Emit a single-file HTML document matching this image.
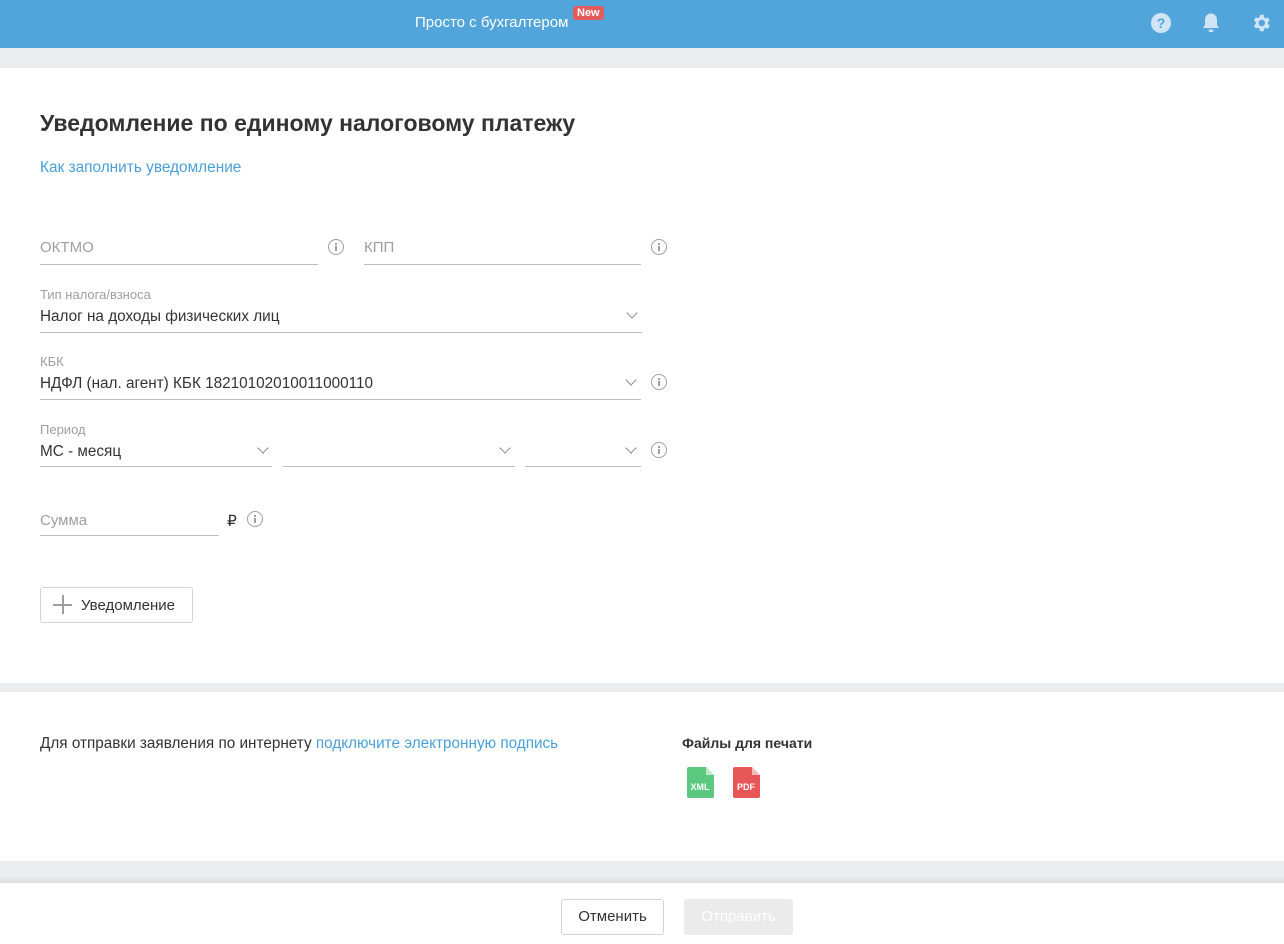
<!DOCTYPE html>
<html><head><meta charset="utf-8">
<style>
*{box-sizing:border-box;margin:0;padding:0}
body{width:1284px;height:944px;background:#ebeef1;font-family:"Liberation Sans",sans-serif;position:relative;overflow:hidden;color:#333}
.a{position:absolute}
.hdr{left:0;top:0;width:1284px;height:48px;background:#52a5db}
.w{background:#fff;left:0;width:1284px}
.line{height:1px;background:#bdbdbd}
.ph{color:#9e9e9e;font-size:15px}
.lbl{color:#9e9e9e;font-size:13px}
.val{color:#333;font-size:15.3px}
.info{width:16px;height:16px;border:1.6px solid #9e9e9e;border-radius:50%;}
.info:before{content:"";position:absolute;left:5.5px;top:2.5px;width:2px;height:2px;background:#9e9e9e}
.info:after{content:"";position:absolute;left:5.5px;top:5.5px;width:2px;height:5px;background:#9e9e9e}
.chev{width:8px;height:8px;border-right:1.6px solid #888;border-bottom:1.6px solid #888;transform:rotate(45deg)}
</style></head><body>
<div class="a hdr"></div>
<div class="a" style="left:415px;top:14px;color:#fff;font-size:15px">Просто с бухгалтером</div>
<div class="a" style="left:573px;top:6px;background:#e45b5b;color:#fff;font-size:11px;font-weight:bold;padding:1px 4px;border-radius:3px">New</div>
<svg class="a" style="left:1150px;top:12px" width="22" height="22" viewBox="0 0 22 22"><circle cx="11" cy="11" r="10" fill="#cfe5f6"/><text x="11" y="16" text-anchor="middle" font-size="14" font-weight="bold" fill="#52a5db" font-family="Liberation Sans">?</text></svg>
<svg class="a" style="left:1201px;top:12px" width="20" height="22" viewBox="0 0 20 22"><path d="M10 1.5c-4 0-6 3-6 6.5v5l-2 3h16l-2-3v-5c0-3.5-2-6.5-6-6.5z" fill="#cfe5f6"/><rect x="7.5" y="17.5" width="5" height="2.5" rx="1.2" fill="#cfe5f6"/></svg>
<svg class="a" style="left:1250px;top:12px" width="22" height="22" viewBox="0 0 24 24"><path fill="#cfe5f6" d="M19.4 13a7.5 7.5 0 000-2l2.1-1.6-2-3.5-2.5 1a7 7 0 00-1.7-1L14.9 3h-4l-.4 2.7a7 7 0 00-1.7 1l-2.5-1-2 3.5L6.4 11a7.5 7.5 0 000 2l-2.1 1.6 2 3.5 2.5-1a7 7 0 001.7 1l.4 2.9h4l.4-2.7a7 7 0 001.7-1l2.5 1 2-3.5zM12.9 15.5a3.5 3.5 0 110-7 3.5 3.5 0 010 7z"/></svg>

<div class="a w" style="top:68px;height:615px"></div>
<div class="a" style="left:40px;top:110px;font-size:23px;font-weight:bold;color:#333">Уведомление по единому налоговому платежу</div>
<div class="a" style="left:40px;top:159px;font-size:15.4px;color:#4a9fd8">Как заполнить уведомление</div>

<div class="a ph" style="left:40px;top:239px">ОКТМО</div>
<div class="a line" style="left:40px;top:264px;width:278px"></div>
<div class="a info" style="left:328px;top:239px"></div>
<div class="a ph" style="left:364px;top:239px">КПП</div>
<div class="a line" style="left:364px;top:264px;width:277px"></div>
<div class="a info" style="left:651px;top:239px"></div>

<div class="a lbl" style="left:40px;top:287px">Тип налога/взноса</div>
<div class="a val" style="left:40px;top:308px">Налог на доходы физических лиц</div>
<div class="a chev" style="left:628px;top:309px"></div>
<div class="a line" style="left:40px;top:332px;width:602px"></div>

<div class="a lbl" style="left:40px;top:354px">КБК</div>
<div class="a val" style="left:40px;top:375px">НДФЛ (нал. агент) КБК 18210102010011000110</div>
<div class="a chev" style="left:627px;top:376px"></div>
<div class="a line" style="left:40px;top:399px;width:601px"></div>
<div class="a info" style="left:651px;top:374px"></div>

<div class="a lbl" style="left:40px;top:422px">Период</div>
<div class="a val" style="left:40px;top:443px">МС - месяц</div>
<div class="a chev" style="left:259px;top:444px"></div>
<div class="a line" style="left:40px;top:466px;width:232px"></div>
<div class="a chev" style="left:501px;top:444px"></div>
<div class="a line" style="left:283px;top:466px;width:232px"></div>
<div class="a chev" style="left:627px;top:444px"></div>
<div class="a line" style="left:525px;top:466px;width:116px"></div>
<div class="a info" style="left:651px;top:442px"></div>

<div class="a ph" style="left:40px;top:512px">Сумма</div>
<div class="a line" style="left:40px;top:535px;width:179px"></div>
<div class="a val" style="left:227px;top:512px">₽</div>
<div class="a info" style="left:247px;top:511px"></div>

<div class="a" style="left:40px;top:587px;width:153px;height:36px;border:1px solid #d4d4d4;border-radius:3px"></div>
<div class="a" style="left:53px;top:604px;width:19px;height:2px;background:#9e9e9e"></div>
<div class="a" style="left:62px;top:595px;width:2px;height:19px;background:#9e9e9e"></div>
<div class="a val" style="left:81px;top:597px;font-size:15px">Уведомление</div>

<div class="a w" style="top:692px;height:169px"></div>
<div class="a" style="left:40px;top:735px;font-size:15.3px">Для отправки заявления по интернету <span style="color:#4a9fd8">подключите электронную подпись</span></div>
<div class="a" style="left:682px;top:735px;font-size:14px;font-weight:bold">Файлы для печати</div>
<svg class="a" style="left:687px;top:767px" width="27" height="31" viewBox="0 0 27 31"><path d="M2 0h17l8 8v21a2 2 0 01-2 2H2a2 2 0 01-2-2V2a2 2 0 012-2z" fill="#5bc77f"/><path d="M19 0l8 8h-8z" fill="#bfe9cc"/><text x="13" y="23" text-anchor="middle" font-size="9" font-weight="bold" fill="#fff" font-family="Liberation Sans">XML</text></svg>
<svg class="a" style="left:733px;top:767px" width="27" height="31" viewBox="0 0 27 31"><path d="M2 0h17l8 8v21a2 2 0 01-2 2H2a2 2 0 01-2-2V2a2 2 0 012-2z" fill="#e85757"/><path d="M19 0l8 8h-8z" fill="#f6bcbc"/><text x="13" y="23" text-anchor="middle" font-size="9" font-weight="bold" fill="#fff" font-family="Liberation Sans">PDF</text></svg>

<div class="a" style="left:0;top:876px;width:1284px;height:7px;background:linear-gradient(#ebeef1,#dcdfe2)"></div>
<div class="a w" style="top:883px;height:61px"></div>
<div class="a" style="left:561px;top:899px;width:103px;height:36px;border:1px solid #d4d4d4;border-radius:3px;text-align:center;line-height:34px;font-size:15px;color:#333">Отменить</div>
<div class="a" style="left:684px;top:899px;width:109px;height:36px;background:#ebebeb;border-radius:3px;text-align:center;line-height:36px;font-size:15px;color:#fff">Отправить</div>
</body></html>
